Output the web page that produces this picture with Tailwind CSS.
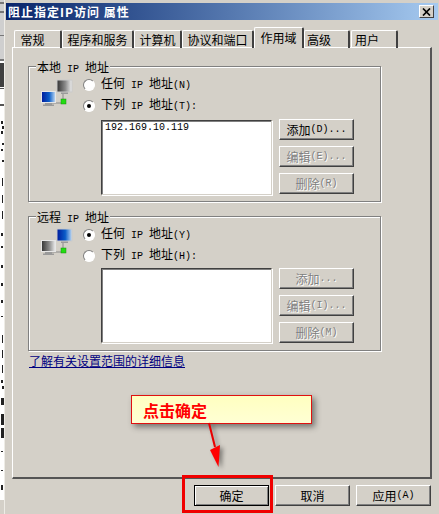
<!DOCTYPE html>
<html lang="zh-CN">
  <head>
    <meta charset="UTF-8" />
    <title>阻止指定IP访问 属性</title>
    <script src="https://cdn.jsdelivr.net/npm/@tailwindcss/browser@4"></script>
  </head>
  <body class="bg-white">
    <div class="relative flex w-[439px] h-[514px] overflow-hidden font-['Noto_Sans_CJK_SC',sans-serif] text-[12px] leading-[14px] text-black">
      <!-- window behind the dialog -->
      <svg class="w-[4px] h-[514px] shrink-0" viewBox="0 0 4 514" fill="#222">
        <rect width="4" height="60" fill="#cfcfcf" />
        <rect y="2" width="4" height="2" fill="#777" />
        <rect y="11" width="4" height="2" fill="#777" />
        <rect y="35" width="4" height="1" fill="#777" />
        <rect y="59" width="4" height="2" fill="#777" />
        <rect y="63" width="4" height="24" fill="#404040" />
        <rect y="88" width="4" height="1" fill="#555" />
        <rect y="104" width="4" height="2" fill="#555" />
        <rect x="1" y="121" width="2" height="3" /><rect x="2" y="126" width="2" height="3" />
        <rect x="1" y="131" width="2" height="3" /><rect x="2" y="143" width="2" height="2" />
        <rect x="1" y="149" width="2" height="2" /><rect x="2" y="160" width="2" height="2" />
        <rect x="2" y="178" width="1" height="8" /><rect x="2" y="195" width="1" height="8" />
        <rect x="2" y="211" width="1" height="8" /><rect x="1" y="233" width="2" height="3" />
        <rect x="1" y="246" width="2" height="2" /><rect x="1" y="265" width="2" height="3" />
        <rect x="1" y="283" width="2" height="3" /><rect x="1" y="300" width="2" height="3" />
        <rect x="1" y="316" width="2" height="1" /><rect x="2" y="335" width="1" height="8" />
        <rect x="2" y="350" width="1" height="8" /><rect x="2" y="365" width="1" height="8" />
        <rect x="1" y="380" width="2" height="3" /><rect x="2" y="386" width="2" height="3" />
        <rect x="1" y="398" width="3" height="7" /><rect x="1" y="414" width="3" height="11" />
        <rect x="1" y="428" width="3" height="10" /><rect x="1" y="451" width="2" height="1" />
        <rect x="1" y="470" width="2" height="1" /><rect x="1" y="485" width="2" height="5" />
        <rect y="500" width="4" height="14" fill="#d4d0c8" />
      </svg>

      <!-- dialog -->
      <div class="flex flex-col flex-1 min-w-0 bg-[#d4d0c8] border-l border-[#eeece6] pt-[3px] pl-[1px]">
        <!-- title bar -->
        <div class="flex items-center justify-between h-[17px] w-[432px] pl-[2px] pr-[4px] bg-gradient-to-r from-[#0a246a] to-[#a6caf0]">
          <span class="font-bold text-white tracking-[1px]">阻止指定IP访问 属性</span>
          <div class="flex items-center justify-center w-[15px] h-[13px] bg-[#d4d0c8] border-t border-l border-white border-r border-b border-r-[#404040] border-b-[#404040]">
            <svg class="w-[9px] h-[8px]" viewBox="0 0 9 8" fill="none" stroke="#000" stroke-width="1.7"><path d="M1 0.5 L8 7.5 M8 0.5 L1 7.5" /></svg>
          </div>
        </div>

        <!-- tabs -->
        <div class="relative z-10 flex items-end h-[21px] mt-[7px] pl-[8px] -mb-px">
          <div class="flex items-center justify-center w-[48px] h-[18px] pr-[10px] border-t border-l border-r-2 border-t-white border-l-white border-r-[#404040] rounded-t-[2px]">常规</div>
          <div class="flex items-center justify-center w-[72px] h-[18px] border-t border-l border-r-2 border-t-white border-l-white border-r-[#404040] rounded-t-[2px]">程序和服务</div>
          <div class="flex items-center justify-center w-[48px] h-[18px] border-t border-l border-r-2 border-t-white border-l-white border-r-[#404040] rounded-t-[2px]">计算机</div>
          <div class="flex items-center justify-center w-[72px] h-[18px] border-t border-l border-r-2 border-t-white border-l-white border-r-[#404040] rounded-t-[2px]">协议和端口</div>
          <div class="flex justify-center w-[50px] h-[21px] pt-[3px] bg-[#d4d0c8] border-t border-l border-r-2 border-t-white border-l-white border-r-[#404040] rounded-t-[2px]">作用域</div>
          <div class="flex items-center w-[46px] h-[18px] pl-[2px] border-t border-l border-r-2 border-t-white border-l-white border-r-[#404040] rounded-t-[2px]">高级</div>
          <div class="flex items-center w-[47px] h-[18px] ml-[1px] pl-[3px] border-t border-l border-r-2 border-t-white border-l-white border-r-[#404040] rounded-t-[2px]">用户</div>
        </div>

        <!-- tab page -->
        <div class="flex flex-col w-[420px] h-[432px] ml-[6px] pt-[18px] pl-[15px] border-t border-l border-r-2 border-b-2 border-t-white border-l-white border-r-[#555555] border-b-[#555555]">
          <!-- local -->
          <div class="relative flex w-[353px] h-[136px] mb-[14px] border border-[#808080] shadow-[inset_1px_1px_0_#fff,1px_1px_0_#fff]">
            <div class="absolute -top-[7px] left-[7px] px-[1px] bg-[#d4d0c8]">本地<span class="font-['Liberation_Mono',monospace] text-[10px] whitespace-pre"> IP </span>地址</div>
            <svg class="w-[34px] h-[30px] ml-[11px] mt-[12px] shrink-0" viewBox="0 0 34 30">
              <defs>
                <linearGradient id="blue" x1="0" x2="1"><stop offset="0" stop-color="#001a9c" /><stop offset="0.55" stop-color="#0a5cc8" /><stop offset="1" stop-color="#c4dcf4" /></linearGradient>
                <linearGradient id="grey" x1="0" x2="1"><stop offset="0" stop-color="#333333" /><stop offset="0.55" stop-color="#8a8a8a" /><stop offset="1" stop-color="#efefef" /></linearGradient>
              </defs>
              <path d="M8 24H23V15" fill="none" stroke="#8a8a8a" />
              <rect x="17" y="1" width="15" height="12" fill="url(#grey)" stroke="#c9c9c9" />
              <path d="M21 13.500H28V15H21Z" fill="#9a9a9a" />
              <rect x="21" y="20" width="5" height="5" fill="#22dd11" stroke="#1a8a10" stroke-width="0.5" />
              <rect x="1.500" y="12.500" width="14" height="11" fill="url(#blue)" stroke="#e6e6e6" />
              <path d="M5 24H12V25.500H14V27H3V25.500H5Z" fill="#9a9a9a" />
            </svg>
            <div class="flex flex-col ml-[9px] pt-[7px]">
              <label class="flex items-center h-[21px] gap-[6px]">
                <span class="w-[12px] h-[12px] rounded-full bg-white border border-t-[#808080] border-l-[#808080] border-r-white border-b-white"></span>
                <span>任何<span class="font-['Liberation_Mono',monospace] text-[10px] whitespace-pre"> IP </span>地址<span class="font-['Liberation_Mono',monospace] text-[10px] whitespace-pre">(N)</span></span>
              </label>
              <label class="flex items-center h-[21px] gap-[6px]">
                <span class="flex items-center justify-center w-[12px] h-[12px] rounded-full bg-white border border-t-[#808080] border-l-[#808080] border-r-white border-b-white"><span class="w-[4px] h-[4px] rounded-full bg-black"></span></span>
                <span>下列<span class="font-['Liberation_Mono',monospace] text-[10px] whitespace-pre"> IP </span>地址<span class="font-['Liberation_Mono',monospace] text-[10px] whitespace-pre">(T):</span></span>
              </label>
              <div class="flex gap-[7px] ml-[18px] mt-[4px]">
                <div class="w-[171px] h-[75px] bg-white pl-[3px] pt-[1px] border border-t-[#404040] border-l-[#404040] border-r-[#d4d0c8] border-b-[#d4d0c8] shadow-[inset_1px_1px_0_#808080,1px_1px_0_#fff]">
                  <span class="block font-['Liberation_Mono',monospace] text-[10px] leading-[12px] whitespace-pre">192.169.10.119</span>
                </div>
                <div class="flex flex-col gap-[6px] -mt-[1px]">
                  <button class="w-[75px] h-[21px] flex items-center justify-center border border-t-white border-l-white border-r-[#404040] border-b-[#404040] shadow-[inset_-1px_-1px_0_#808080]">添加<span class="font-['Liberation_Mono',monospace] text-[10px] whitespace-pre">(D)...</span></button>
                  <button class="w-[75px] h-[21px] flex items-center justify-center text-[#808080] [text-shadow:1px_1px_0_#fff] border border-t-white border-l-white border-r-[#404040] border-b-[#404040] shadow-[inset_-1px_-1px_0_#808080]">编辑<span class="font-['Liberation_Mono',monospace] text-[10px] whitespace-pre">(E)...</span></button>
                  <button class="w-[75px] h-[21px] flex items-center justify-center text-[#808080] [text-shadow:1px_1px_0_#fff] border border-t-white border-l-white border-r-[#404040] border-b-[#404040] shadow-[inset_-1px_-1px_0_#808080]">删除<span class="font-['Liberation_Mono',monospace] text-[10px] whitespace-pre">(R)</span></button>
                </div>
              </div>
            </div>
          </div>

          <!-- remote -->
          <div class="relative flex w-[353px] h-[135px] border border-[#808080] shadow-[inset_1px_1px_0_#fff,1px_1px_0_#fff]">
            <div class="absolute -top-[7px] left-[7px] px-[1px] bg-[#d4d0c8]">远程<span class="font-['Liberation_Mono',monospace] text-[10px] whitespace-pre"> IP </span>地址</div>
            <svg class="w-[34px] h-[30px] ml-[11px] mt-[11px] shrink-0" viewBox="0 0 34 30">
              <path d="M8 24H23V15" fill="none" stroke="#8a8a8a" />
              <rect x="17" y="1" width="15" height="12" fill="url(#blue)" stroke="#c9c9c9" />
              <path d="M21 13.500H28V15H21Z" fill="#9a9a9a" />
              <rect x="21" y="20" width="5" height="5" fill="#22dd11" stroke="#1a8a10" stroke-width="0.5" />
              <rect x="1.500" y="12.500" width="14" height="11" fill="url(#grey)" stroke="#e6e6e6" />
              <path d="M5 24H12V25.500H14V27H3V25.500H5Z" fill="#9a9a9a" />
            </svg>
            <div class="flex flex-col ml-[9px] pt-[7px]">
              <label class="flex items-center h-[21px] gap-[6px]">
                <span class="flex items-center justify-center w-[12px] h-[12px] rounded-full bg-white border border-t-[#808080] border-l-[#808080] border-r-white border-b-white"><span class="w-[4px] h-[4px] rounded-full bg-black"></span></span>
                <span>任何<span class="font-['Liberation_Mono',monospace] text-[10px] whitespace-pre"> IP </span>地址<span class="font-['Liberation_Mono',monospace] text-[10px] whitespace-pre">(Y)</span></span>
              </label>
              <label class="flex items-center h-[21px] gap-[6px]">
                <span class="w-[12px] h-[12px] rounded-full bg-white border border-t-[#808080] border-l-[#808080] border-r-white border-b-white"></span>
                <span>下列<span class="font-['Liberation_Mono',monospace] text-[10px] whitespace-pre"> IP </span>地址<span class="font-['Liberation_Mono',monospace] text-[10px] whitespace-pre">(H):</span></span>
              </label>
              <div class="flex gap-[7px] ml-[18px] mt-[2px]">
                <div class="w-[171px] h-[75px] bg-white border border-t-[#404040] border-l-[#404040] border-r-[#d4d0c8] border-b-[#d4d0c8] shadow-[inset_1px_1px_0_#808080,1px_1px_0_#fff]"></div>
                <div class="flex flex-col gap-[6px]">
                  <button class="w-[75px] h-[21px] flex items-center justify-center text-[#808080] [text-shadow:1px_1px_0_#fff] border border-t-white border-l-white border-r-[#404040] border-b-[#404040] shadow-[inset_-1px_-1px_0_#808080]">添加<span class="font-['Liberation_Mono',monospace] text-[10px] whitespace-pre">...</span></button>
                  <button class="w-[75px] h-[21px] flex items-center justify-center text-[#808080] [text-shadow:1px_1px_0_#fff] border border-t-white border-l-white border-r-[#404040] border-b-[#404040] shadow-[inset_-1px_-1px_0_#808080]">编辑<span class="font-['Liberation_Mono',monospace] text-[10px] whitespace-pre">(I)...</span></button>
                  <button class="w-[75px] h-[21px] flex items-center justify-center text-[#808080] [text-shadow:1px_1px_0_#fff] border border-t-white border-l-white border-r-[#404040] border-b-[#404040] shadow-[inset_-1px_-1px_0_#808080]">删除<span class="font-['Liberation_Mono',monospace] text-[10px] whitespace-pre">(M)</span></button>
                </div>
              </div>
            </div>
          </div>

          <a class="mt-[3px] ml-[1px] w-fit text-[#000080] underline">了解有关设置范围的详细信息</a>
        </div>

        <!-- bottom buttons -->
        <div class="flex gap-[6px] mt-[6px] ml-[188px]">
          <button class="w-[75px] h-[21px] flex items-center justify-center border border-black shadow-[inset_1px_1px_0_#fff,inset_-1px_-1px_0_#808080]">确定</button>
          <button class="w-[75px] h-[21px] flex items-center justify-center border border-t-white border-l-white border-r-[#404040] border-b-[#404040] shadow-[inset_-1px_-1px_0_#808080]">取消</button>
          <button class="w-[75px] h-[21px] flex items-center justify-center border border-t-white border-l-white border-r-[#404040] border-b-[#404040] shadow-[inset_-1px_-1px_0_#808080]">应用<span class="font-['Liberation_Mono',monospace] text-[10px] whitespace-pre">(A)</span></button>
        </div>
      </div>

      <!-- annotations -->
      <div class="absolute left-[131px] top-[395px] flex items-center w-[181px] h-[29px] pl-[11px] bg-gradient-to-b from-[#ffffc0] to-[#ffffd4] border border-[#e01010] shadow-[3px_3px_6px_rgba(0,0,0,0.45)] text-[16px] font-bold text-[#ff0000]">点击确定</div>
      <svg class="absolute left-[200px] top-[420px] w-[32px] h-[52px] drop-shadow-[3px_2px_2px_rgba(0,0,0,0.4)]" viewBox="0 0 32 52">
        <path d="M9 3 L15 27" stroke="#e80000" stroke-width="2" />
        <path d="M10 30 L20 25 L18.500 47Z" fill="#ff0000" />
      </svg>
      <div class="absolute left-[182px] top-[475px] w-[91px] h-[38px] border-[3px] border-[#f00000]"></div>
    </div>
  </body>
</html>
